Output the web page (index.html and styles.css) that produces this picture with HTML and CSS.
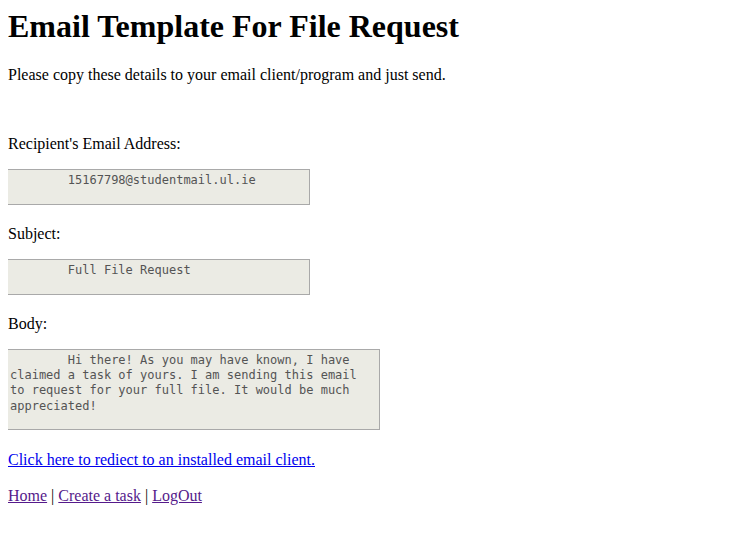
FILE: index.html
```html
<!DOCTYPE html>
<html>
<head>
<meta charset="utf-8">
<title>Email Template For File Request</title>
<link rel="stylesheet" href="styles.css">
</head>
<body>
<h1 class="title">Email Template For File Request</h1>
<p class="intro">Please copy these details to your email client/program and just send.</p>
<p class="label">Recipient's Email Address:</p>
<div class="field"><textarea class="box box-short" readonly>&#9;15167798@studentmail.ul.ie</textarea></div>
<p class="label">Subject:</p>
<div class="field"><textarea class="box box-short" readonly>&#9;Full File Request</textarea></div>
<p class="label">Body:</p>
<div class="field"><textarea class="box box-body" readonly>&#9;Hi there! As you may have known, I have claimed a task of yours. I am sending this email to request for your full file. It would be much appreciated!</textarea></div>
<p class="mail"><a class="mail-link" href="#">Click here to rediect to an installed email client.</a></p>
<p class="nav"><a class="nav-link" href="#">Home</a> | <a class="nav-link" href="#">Create a task</a> | <a class="nav-link" href="#">LogOut</a></p>
</body>
</html>
```
FILE: styles.css
```css
html, body {
  background: #ffffff;
}
body {
  margin: 8px;
  font-family: "Liberation Serif", "Times New Roman", serif;
  font-size: 16px;
  color: #000000;
}
.title {
  margin: 0 0 21.44px 0;
  font-size: 32px;
  font-weight: bold;
}
.intro {
  margin: 16px 0 50.4px 0;
}
.label {
  margin: 16px 0;
}
.mail {
  margin: 17.6px 0 16px 0;
}
.nav {
  margin: 17.6px 0 16px 0;
}
.field {
  margin: 0 0 0 -1px;
}
.box {
  display: inline-block;
  box-sizing: content-box;
  margin: 0;
  padding: 3px 2px 1px 2px;
  border: 1px solid #a9a9a9;
  background: #ebebe4;
  color: #545454;
  font-family: "DejaVu Sans Mono", "Liberation Mono", monospace;
  font-size: 12px;
  line-height: 15.3px;
  tab-size: 8;
  resize: none;
  overflow: hidden;
  outline: none;
}
.box-short {
  width: 297px;
  height: 30px;
}
.box-body {
  width: 367px;
  height: 75px;
}
.mail-link {
  color: #0000ee;
}
.nav-link {
  color: #551a8b;
}
```
